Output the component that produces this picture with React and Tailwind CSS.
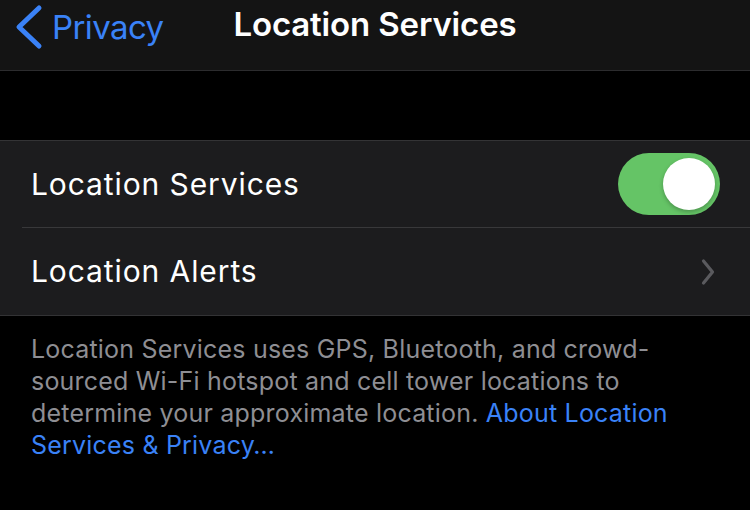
export default function App() {
  const font = { fontFamily: '"Inter", "Liberation Sans", sans-serif' };
  return (
    <div className="w-[750px] h-[510px] bg-black overflow-hidden flex flex-col" style={font}>
      {/* Nav bar */}
      <div className="h-[71px] bg-[#141414] border-b border-[#2c2c2e] relative flex items-start">
        <div className="flex items-center pl-[14px] pt-[4px] gap-[8px]">
          <svg width="30" height="46" viewBox="0 0 30 46" fill="none">
            <path d="M25 4 L5 23 L25 42" stroke="#3a82f7" strokeWidth="5" strokeLinecap="round" strokeLinejoin="round" />
          </svg>
          <span className="text-[33px] text-[#3a82f7] leading-none tracking-[-0.6px]">Privacy</span>
        </div>
        <div className="absolute left-0 right-0 top-[8px] text-center text-white text-[33px] font-semibold leading-none tracking-[-0.15px]">
          Location Services
        </div>
      </div>
      {/* gap */}
      <div className="h-[69px]" />
      {/* group */}
      <div className="bg-[#1c1c1e] border-t border-b border-[#333335]">
        <div className="h-[86px] flex items-center justify-between pl-[31px] pr-[30px]">
          <span className="text-white text-[30px] tracking-[0.9px]">Location Services</span>
          <div className="w-[102px] h-[62px] rounded-full bg-[#65c466] relative">
            <div className="absolute right-[5px] top-[5px] w-[52px] h-[52px] rounded-full bg-white shadow-[0_2px_4px_rgba(0,0,0,0.25)]" />
          </div>
        </div>
        <div className="ml-[22px] h-px bg-[#38383a]" />
        <div className="h-[87px] flex items-center justify-between pl-[31px] pr-[35px]">
          <span className="text-white text-[30px] tracking-[0.9px]">Location Alerts</span>
          <svg width="14" height="28" viewBox="0 0 14 28" fill="none">
            <path d="M2.5 3 L11.5 14 L2.5 25" stroke="#5a5a5e" strokeWidth="3.2" strokeLinecap="round" strokeLinejoin="round" />
          </svg>
        </div>
      </div>
      {/* footer */}
      <div className="pl-[31px] pr-[20px] pt-[17px] text-[25px] leading-[32px] text-[#8e8e93] tracking-[0.2px] whitespace-nowrap">
        Location Services uses GPS, Bluetooth, and crowd-
        <br />
        sourced Wi-Fi hotspot and cell tower locations to
        <br />
        determine your approximate location.{' '}
        <span className="text-[#3a82f7]">About Location</span>
        <br />
        <span className="text-[#3a82f7]">Services &amp; Privacy…</span>
      </div>
    </div>
  );
}
